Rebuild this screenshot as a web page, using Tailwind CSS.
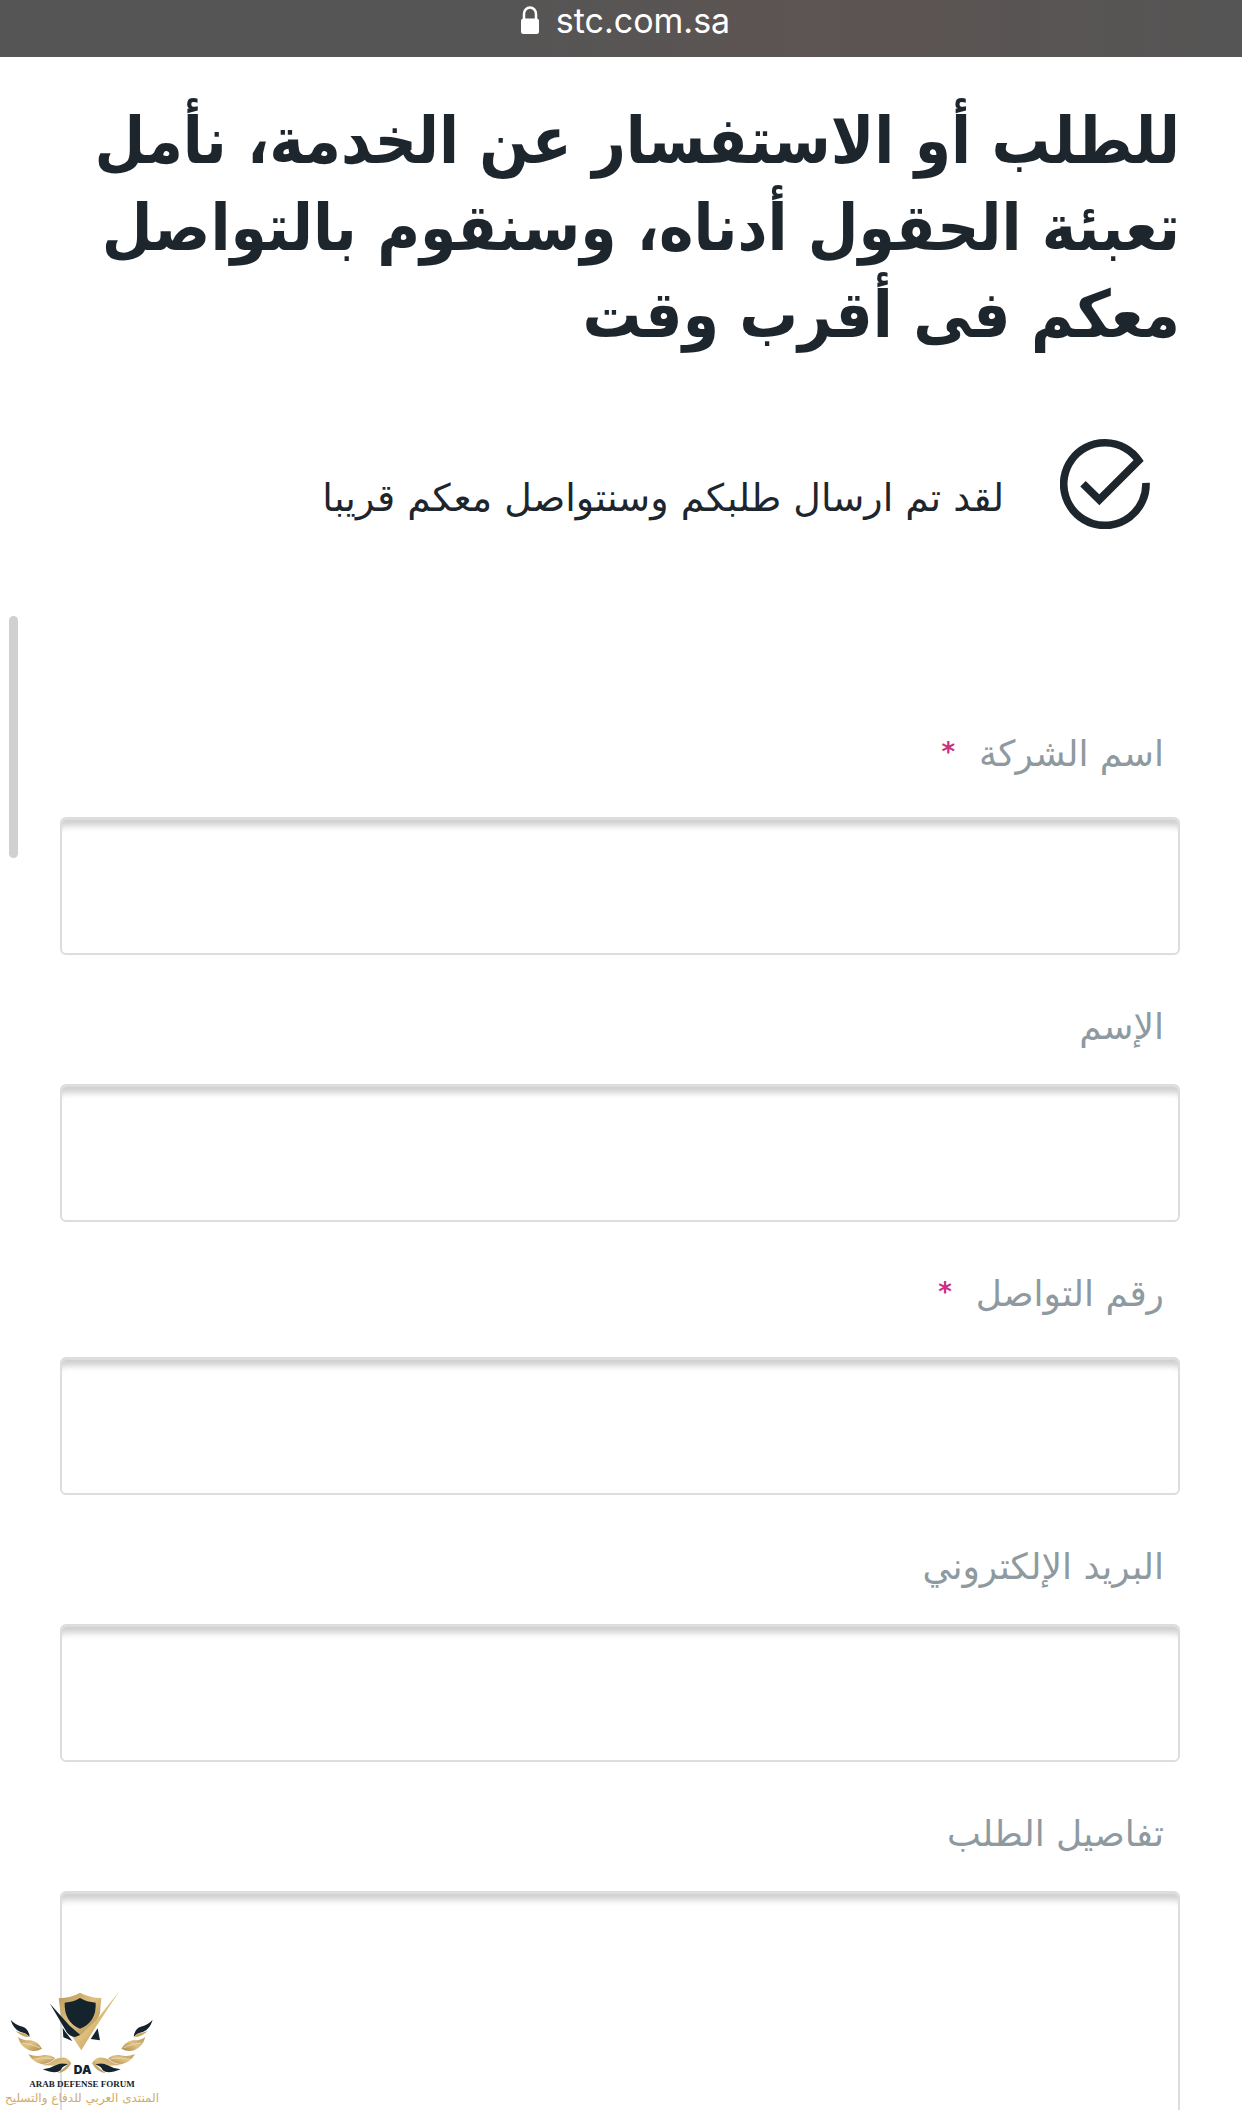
<!DOCTYPE html>
<html lang="ar" dir="rtl">
<head>
    <meta charset="UTF-8">
    <meta name="viewport" content="width=device-width, initial-scale=1.0">
    <title>stc - طلب الخدمة</title>

    <!-- Tailwind CSS -->
    <script src="https://cdn.jsdelivr.net/npm/@tailwindcss/browser@4"></script>

    <style>
        body {
            font-family: 'DejaVu Sans', sans-serif;
        }
        h1 {
            font-family: 'DejaVu Sans Condensed', 'DejaVu Sans', sans-serif;
        }
    </style>
</head>
<body class="relative h-screen overflow-hidden bg-white text-[#1d252d]">

    <!-- Address bar -->
    <header dir="ltr" class="flex h-[57px] items-start justify-center gap-4 bg-linear-to-r from-[#555555] from-40% via-[#5d5453] via-65% to-[#555555] pl-2 text-white font-['Inter']">
        <svg class="mt-[6px] h-7 w-5" viewBox="0 0 20 28" fill="none" aria-hidden="true">
            <path d="M4 14V8a6 6.500 0 0 1 12 0v6" stroke="currentColor" stroke-width="2.500"/>
            <rect x="1" y="12.500" width="18" height="15.500" rx="2.500" fill="currentColor"/>
        </svg>
        <span class="text-[34px] leading-[42px]">stc.com.sa</span>
    </header>

    <main class="pt-10 pr-[62px] pl-[60px]">
        <h1 class="text-[65px] leading-[87px] font-bold">للطلب أو الاستفسار عن الخدمة، نأمل<br>تعبئة الحقول أدناه، وسنقوم بالتواصل<br>معكم فى أقرب وقت</h1>

        <!-- Success message -->
        <div class="mt-20 flex items-start gap-14 pr-[30px]" role="status">
            <svg class="h-[91px] w-[90px] shrink-0" viewBox="0 0 270 272" fill="none" stroke="currentColor" stroke-width="23" aria-hidden="true">
                <path d="M258 134A123.500 124 0 1 1 236 67L118 185L69 137"/>
            </svg>
            <p class="pt-8 text-[38px] leading-[56px]">لقد تم ارسال طلبكم وسنتواصل معكم قريبا</p>
        </div>

        <!-- Request form -->
        <form class="mt-[198px]">
            <label for="company" class="flex h-[90px] items-start gap-6 pr-4 text-[36px] leading-[54px] text-[#8e9aa0]">اسم الشركة <span class="text-[26px] leading-[50px] font-bold text-[#cd2f81]">*</span></label>
            <input id="company" type="text" required class="block h-[138px] w-full rounded-md border-2 border-t-3 border-[#dcdddd] px-4 text-4xl inset-shadow-[0_12px_6px_-6px_#d0d0d0]">

            <label for="name" class="flex h-[129px] items-start pt-[45px] pr-4 text-[36px] leading-[54px] text-[#8e9aa0]">الإسم</label>
            <input id="name" type="text" class="block h-[138px] w-full rounded-md border-2 border-t-3 border-[#dcdddd] px-4 text-4xl inset-shadow-[0_12px_6px_-6px_#d0d0d0]">

            <label for="phone" class="flex h-[135px] items-start gap-6 pt-[45px] pr-4 text-[36px] leading-[54px] text-[#8e9aa0]">رقم التواصل <span class="text-[26px] leading-[50px] font-bold text-[#cd2f81]">*</span></label>
            <input id="phone" type="tel" required class="block h-[138px] w-full rounded-md border-2 border-t-3 border-[#dcdddd] px-4 text-4xl inset-shadow-[0_12px_6px_-6px_#d0d0d0]">

            <label for="email" class="flex h-[129px] items-start pt-[45px] pr-4 text-[36px] leading-[54px] text-[#8e9aa0]">البريد الإلكتروني</label>
            <input id="email" type="email" class="block h-[138px] w-full rounded-md border-2 border-t-3 border-[#dcdddd] px-4 text-4xl inset-shadow-[0_12px_6px_-6px_#d0d0d0]">

            <label for="details" class="flex h-[129px] items-start pt-[45px] pr-4 text-[36px] leading-[54px] text-[#8e9aa0]">تفاصيل الطلب</label>
            <textarea id="details" class="block h-80 w-full resize-none rounded-md border-2 border-t-3 border-[#dcdddd] p-4 text-4xl inset-shadow-[0_12px_6px_-6px_#d0d0d0]"></textarea>
        </form>
    </main>

    <!-- Scroll indicator -->
    <div class="absolute top-[616px] left-[9px] h-[242px] w-[9px] rounded-full bg-[#d0d0d0]"></div>

    <!-- Forum watermark -->
    <div class="absolute bottom-0 left-1 flex w-[156px] flex-col items-center pb-1">
        <svg class="h-[87px] w-[144px]" viewBox="28 94 432 261" aria-hidden="true">
            <defs>
                <linearGradient id="gold" x1="0" y1="0" x2="1" y2="1">
                    <stop offset="0" stop-color="#b9975b"/>
                    <stop offset=".5" stop-color="#dfc081"/>
                    <stop offset="1" stop-color="#a98646"/>
                </linearGradient>
            </defs>
            <!-- Shield and blades -->
            <path d="M174 116Q212 114 238 99Q266 114 302 115L298 160Q287 203 239 227Q187 205 181 170Z" fill="url(#gold)"/>
            <path d="M192 129Q220 127 238 115Q258 127 285 129Q288 187 238 207Q190 187 192 129Z" fill="#14232c"/>
            <path d="M186 204L194 216L215 244L188 233ZM291 206L270 238L298 242Z" fill="#14232c"/>
            <path d="M203 213Q222 232 240 226L286 182L355 96L282 207L242 272Z" fill="url(#gold)"/>
            <path d="M148 132L207 198L239 226L223 232Q205 230 196 214Z" fill="#14232c"/>
            <!-- Feathers, drawn once and mirrored -->
            <g id="wing">
                <path d="M30 180Q45 197 66 201Q84 207 87 231Q75 219 58 216Q38 208 30 180Z" fill="#14232c"/>
                <path d="M45 214Q58 219 66 219Q78 222 86 232Q66 234 45 214Z" fill="#c9a764"/>
                <path d="M52 232Q66 243 90 242Q112 246 124 267Q106 277 86 272Q60 262 52 232Z" fill="url(#gold)"/>
                <path d="M64 251Q90 250 118 265" stroke="#f3e6c8" stroke-width="2" fill="none"/>
                <path d="M83 284Q106 293 130 286Q149 284 164 295Q148 313 122 313Q98 309 83 284Z" fill="url(#gold)"/>
                <path d="M97 300Q124 290 155 297" stroke="#f3e6c8" stroke-width="2" fill="none"/>
                <path d="M120 316Q148 314 163 299Q198 284 212 311Q198 337 171 341Q186 330 202 314Q180 308 160 318Z" fill="url(#gold)"/>
                <path d="M126 329Q149 326 168 315Q184 309 202 314Q182 322 180 332Q165 345 126 329Z" fill="#14232c"/>
            </g>
            <use href="#wing" transform="translate(486 0) scale(-1 1)"/>
            <text x="246" y="342" direction="ltr" text-anchor="middle" font-family="Inter, sans-serif" font-weight="900" font-size="36" fill="#14232c">DA</text>
        </svg>
        <span dir="ltr" class="font-['Liberation_Serif'] text-[9px] leading-[12px] font-bold whitespace-nowrap text-[#14232c]">ARAB DEFENSE FORUM</span>
        <span class="text-[12px] leading-4 whitespace-nowrap text-[#d0ab67]">المنتدى العربي للدفاع والتسليح</span>
    </div>
</body>
</html>
